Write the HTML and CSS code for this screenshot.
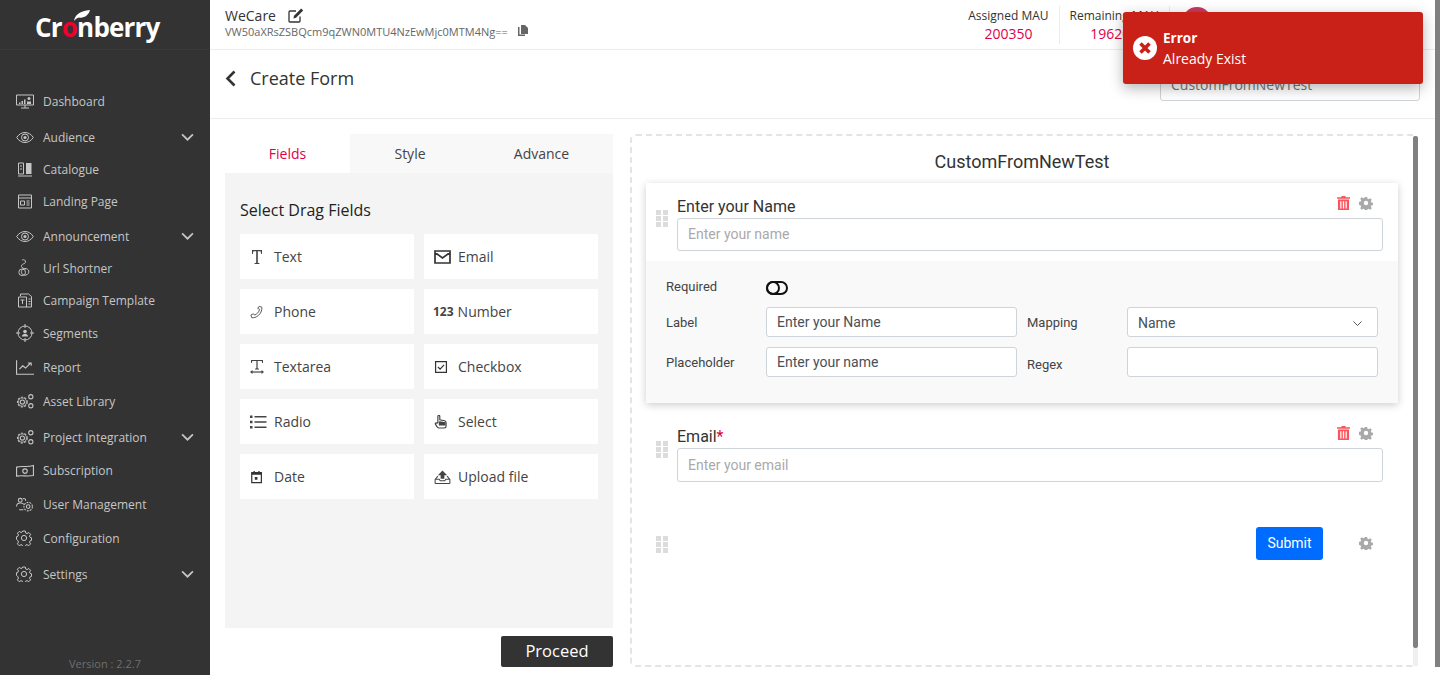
FILE: index.html
```html
<!DOCTYPE html>
<html lang="en">
<head>
  <meta charset="UTF-8" />
  <title>Cronberry - Create Form</title>
  <link rel="stylesheet" href="styles.css">
</head>
<body>
  <svg class="defs" width="0" height="0">
    <symbol id="gear" viewBox="0 0 16 16">
      <path fill="#a9a9a9" fill-rule="evenodd" d="M6.7 1h2.6l.4 2 1.3.6 1.8-1.1 1.8 1.8-1.1 1.8.6 1.3 2 .4v2.6l-2 .4-.6 1.3 1.1 1.8-1.8 1.8-1.8-1.1-1.3.6-.4 2H6.700l-.4-2-1.300-.6-1.800 1.100-1.800-1.800 1.100-1.800-.6-1.300-2-.4V6.700l2-.4.6-1.300-1.100-1.800 1.800-1.800 1.800 1.100 1.300-.6zM8 5.500a2.500 2.500 0 1 0 0 5 2.500 2.500 0 0 0 0-5z"/>
    </symbol>
    <symbol id="trash" viewBox="0 0 14 15">
      <path fill="#f9555d" fill-rule="evenodd" d="M5 0h4l.5 1.200H14v1.600H0V1.200h4.500zM1 3.800h12V15H1zM3.500 5.500v7.800h1.300V5.500zm2.800 0v7.800h1.400V5.500zm2.900 0v7.800h1.300V5.500z"/>
    </symbol>
    <symbol id="drag" viewBox="0 0 12 17">
      <path fill="#dcdcdc" d="M0 0h5v5H0zM7 0h5v5H7zM0 6h5v5H0zM7 6h5v5H7zM0 12h5v5H0zM7 12h5v5H7z"/>
    </symbol>
    <symbol id="eye" viewBox="0 0 18 12">
      <path fill="none" stroke="currentColor" d="M.7 6C3 2.500 6 1 9 1s6 1.500 8.300 5C15 9.500 12 11 9 11S3 9.500.7 6z"/>
      <circle cx="9" cy="6" r="3.500" fill="none" stroke="currentColor"/>
      <circle cx="9" cy="6" r="1.600" fill="currentColor"/>
    </symbol>
    <symbol id="cogs" viewBox="0 0 17 14">
      <circle cx="6" cy="7.500" r="2" fill="none" stroke="currentColor"/>
      <circle cx="6" cy="7.500" r="4.600" fill="none" stroke="currentColor" stroke-dasharray="2 1.300"/>
      <circle cx="6" cy="7.500" r="3.800" fill="none" stroke="currentColor" stroke-width=".7"/>
      <circle cx="14" cy="2.500" r="2" fill="none" stroke="currentColor"/>
      <circle cx="14" cy="11" r="2" fill="none" stroke="currentColor"/>
    </symbol>
    <symbol id="cog" viewBox="0 0 16 16">
      <path fill="none" stroke="currentColor" d="M6.700 1h2.600l.4 2 1.300.6 1.800-1.100 1.800 1.800-1.100 1.800.6 1.300 1.400.4v2.600l-1.400.4-.6 1.300 1.100 1.800-1.800 1.800-1.800-1.100-1.300.6-.4 1.300H6.700l-.4-1.300-1.300-.6-1.800 1.100-1.800-1.800 1.100-1.800-.6-1.300L.5 9.300V6.700l1.400-.4.6-1.300-1.100-1.800 1.800-1.800 1.800 1.100 1.300-.6z"/>
      <circle cx="8" cy="8" r="2.600" fill="none" stroke="currentColor"/>
    </symbol>
  </svg>

  <div class="app">
    <aside class="sidebar">
      <div class="logo">
        <span class="logo-text">Cr<span class="logo-o">o</span>nberry</span>
        <svg class="logo-leaf" width="16" height="11" viewBox="0 0 16 11"><path fill="#fff" d="M0 11C1 5 6 .8 16 0c-1 5-6 8.500-11 7.500C3 8 1.500 9 0 11z"/></svg>
      </div>

      <nav class="nav">
        <a class="nav-item">
          <svg class="nav-icon" viewBox="0 0 18 14"><path fill="none" stroke="currentColor" d="M.5.500h17v10H.500zM5 13.500h8M9 10.500v3"/><path fill="currentColor" d="M3 8h1.500v1.500H3zM5.500 6.500H7v3H5.500zM8 5h1.500v4.500H8z"/><circle cx="13" cy="4" r="1.500" fill="currentColor"/><path fill="currentColor" d="M11 7h4v2.500h-4z"/></svg>
          <span>Dashboard</span>
        </a>
        <a class="nav-item mt4">
          <svg class="nav-icon"><use href="#eye"/></svg>
          <span>Audience</span>
          <svg class="nav-chevron" viewBox="0 0 12 7"><path fill="none" stroke="currentColor" stroke-width="1.600" d="M1 1l5 5 5-5"/></svg>
        </a>
        <a class="nav-item">
          <svg class="nav-icon" viewBox="0 0 15 15"><path fill="none" stroke="currentColor" d="M1 1h5v11H1zM2.500 4h2M2.500 7h2M.5 14h14"/><path fill="currentColor" d="M8.500 1H14v11H8.500z"/></svg>
          <span>Catalogue</span>
        </a>
        <a class="nav-item">
          <svg class="nav-icon" viewBox="0 0 15 15"><path fill="none" stroke="currentColor" d="M1 1h13v13H1zM1 4h13M3 7h4v4H3zM9 7h3M9 9h3M9 11h3"/></svg>
          <span>Landing Page</span>
        </a>
        <a class="nav-item mt3">
          <svg class="nav-icon"><use href="#eye"/></svg>
          <span>Announcement</span>
          <svg class="nav-chevron" viewBox="0 0 12 7"><path fill="none" stroke="currentColor" stroke-width="1.600" d="M1 1l5 5 5-5"/></svg>
        </a>
        <a class="nav-item">
          <svg class="nav-icon nav-icon-tall" viewBox="0 0 16 19"><path fill="none" stroke="currentColor" d="M5 1c2-.8 4 .5 3.500 2.500C8 5 5.500 5 4.500 6.500c-1 2 1 3.500 3 3.500 2.500 0 4 1 4.500 2.500.5 2-1 4-3 4.500-2 .5-4-.5-4.500-2s-.5-2.500.5-3.500 2.500-1.500 4-1"/><circle cx="5" cy="14" r="3.500" fill="none" stroke="currentColor"/></svg>
          <span>Url Shortner</span>
        </a>
        <a class="nav-item">
          <svg class="nav-icon" viewBox="0 0 15 15"><path fill="none" stroke="currentColor" d="M3 3V1h8l3 2.500V14H1V4h8v10M3 7h4M5 7v4M11 6h2M11 8.500h2M11 11h2"/></svg>
          <span>Campaign Template</span>
        </a>
        <a class="nav-item mt1">
          <svg class="nav-icon nav-icon-tall" viewBox="0 0 18 18"><circle cx="9" cy="9" r="7" fill="none" stroke="currentColor"/><path fill="none" stroke="currentColor" d="M9 0v4M9 14v4M0 9h4M14 9h4"/><circle cx="9" cy="7.500" r="1.800" fill="currentColor"/><path fill="currentColor" d="M5.800 12.500c.4-2 1.800-2.800 3.200-2.800s2.800.8 3.200 2.800z"/></svg>
          <span>Segments</span>
        </a>
        <a class="nav-item mt2">
          <svg class="nav-icon" viewBox="0 0 16 13"><path fill="none" stroke="currentColor" d="M.5 0v12.500H16M3 8l3-3 2.500 2L13 2.500M10.500 2.500H13.500V5"/></svg>
          <span>Report</span>
        </a>
        <a class="nav-item mt2">
          <svg class="nav-icon"><use href="#cogs"/></svg>
          <span>Asset Library</span>
        </a>
        <a class="nav-item mt4">
          <svg class="nav-icon"><use href="#cogs"/></svg>
          <span>Project Integration</span>
          <svg class="nav-chevron" viewBox="0 0 12 7"><path fill="none" stroke="currentColor" stroke-width="1.600" d="M1 1l5 5 5-5"/></svg>
        </a>
        <a class="nav-item mt1">
          <svg class="nav-icon" viewBox="0 0 16 11"><path fill="none" stroke="currentColor" d="M.5 2.500C5 1 10 3 15.500 1v9C10 11 5 9.500.5 10.500z"/><circle cx="8" cy="6" r="2" fill="none" stroke="currentColor"/></svg>
          <span>Subscription</span>
        </a>
        <a class="nav-item mt2">
          <svg class="nav-icon" viewBox="0 0 17 14"><circle cx="4" cy="3" r="1.800" fill="none" stroke="currentColor"/><path fill="none" stroke="currentColor" d="M.5 9c0-2.500 1.500-3.500 3.500-3.500S7 6 7.500 7M6.500 1.500C8 1 9.500 2 9 3.500M3 12h4"/><circle cx="11.500" cy="9" r="4" fill="none" stroke="currentColor" stroke-dasharray="1.800 1"/><circle cx="11.500" cy="9" r="1.700" fill="none" stroke="currentColor"/></svg>
          <span>User Management</span>
        </a>
        <a class="nav-item mt2">
          <svg class="nav-icon nav-icon-cog"><use href="#cog"/></svg>
          <span>Configuration</span>
        </a>
        <a class="nav-item mt4">
          <svg class="nav-icon nav-icon-cog"><use href="#cog"/></svg>
          <span>Settings</span>
          <svg class="nav-chevron" viewBox="0 0 12 7"><path fill="none" stroke="currentColor" stroke-width="1.600" d="M1 1l5 5 5-5"/></svg>
        </a>
      </nav>

      <div class="version">Version : 2.2.7</div>
    </aside>

    <div class="main">
      <header class="topbar">
        <div class="project">
          <div class="project-name">
            WeCare
            <svg width="16" height="15" viewBox="0 0 16 15"><path fill="none" stroke="#333" stroke-width="1.300" d="M12 8.500V13a1 1 0 0 1-1 1H2a1 1 0 0 1-1-1V4a1 1 0 0 1 1-1h6"/><path fill="#333" d="M13.200.6l2 2L8 9.800l-2.600.6.600-2.600z"/></svg>
          </div>
          <div class="project-key">
            VW50aXRsZSBQcm9qZWN0MTU4NzEwMjc0MTM4Ng==
            <svg width="10" height="11" viewBox="0 0 10 11"><path fill="#666" d="M3 0h4l3 3v6H3z"/><path fill="#666" d="M1.500 2v7.500H7V11H0V2z"/></svg>
          </div>
        </div>
        <div class="stat">
          <div class="stat-label">Assigned MAU</div>
          <div class="stat-value">200350</div>
        </div>
        <div class="stat">
          <div class="stat-label">Remaining MAU</div>
          <div class="stat-value">196200</div>
        </div>
        <div class="avatar"></div>
      </header>

      <div class="titlebar">
        <svg class="back" width="11" height="17" viewBox="0 0 11 17"><path fill="none" stroke="#333" stroke-width="2.600" d="M9.500 1.500l-7 7 7 7"/></svg>
        <h1>Create Form</h1>
        <input class="form-name" type="text" value="CustomFromNewTest">
      </div>

      <div class="content">
        <section class="fields-panel">
          <div class="tabs">
            <div class="tab tab-active">Fields</div>
            <div class="tab">Style</div>
            <div class="tab">Advance</div>
          </div>
          <div class="fields-body">
            <h2>Select Drag Fields</h2>
            <div class="field-grid">
              <div class="field-card">
                <svg class="field-icon" viewBox="0 0 14 14"><path fill="#444" d="M2 0h10v4h-.8l-.6-2.800H7.800v11.600l1.700.5v.7h-5v-.7l1.700-.5V1.200H3.400L2.800 4H2z"/></svg>
                <span>Text</span>
              </div>
              <div class="field-card">
                <svg class="field-icon field-icon-wide" viewBox="0 0 17 14"><path fill="none" stroke="#333" stroke-width="1.700" d="M1 1h15v12H1zM1 2.500l7.500 5.500L16 2.500"/></svg>
                <span>Email</span>
              </div>
              <div class="field-card">
                <svg class="field-icon" viewBox="0 0 16 16"><path fill="none" stroke="#444" d="M10.500 1.500l3 1c.5 4-1.500 7.500-4 9.500s-5 3-7.500 2.500l-1-3 3-1.500 1.300 1.500c2.500-1 5-3.500 5.700-6.500L8.800 3.800z"/></svg>
                <span>Phone</span>
              </div>
              <div class="field-card field-card-num">
                <b class="field-num">123</b>
                <span>Number</span>
              </div>
              <div class="field-card">
                <svg class="field-icon" viewBox="0 0 14 14"><path fill="#444" d="M1 0h12v3h-.8l-.5-2H7.600v7.300l1.400.5V9.500H5v-.7l1.400-.5V1H2.300l-.5 2H1z"/><path fill="none" stroke="#444" stroke-width="1.200" d="M2 12h10"/><path fill="#444" d="M0 12l2.500-2v4zM14 12l-2.500-2v4z"/></svg>
                <span>Textarea</span>
              </div>
              <div class="field-card">
                <svg class="field-icon" viewBox="0 0 16 16"><path fill="none" stroke="#333" stroke-width="1.400" d="M1.800 1.800h12.400v12.400H1.800zM4.500 8l2.500 2.500 4.500-5"/></svg>
                <span>Checkbox</span>
              </div>
              <div class="field-card">
                <svg class="field-icon field-icon-wide" viewBox="0 0 17 14"><path fill="#444" d="M0 .5h2.500V3H0zM0 5.800h2.500v2.500H0zM0 11h2.500v2.500H0zM4.500 1h12v1.500h-12zM4.500 6.300h12v1.500h-12zM4.500 11.500h12V13h-12z"/></svg>
                <span>Radio</span>
              </div>
              <div class="field-card">
                <svg class="field-icon" viewBox="2 1 12.500 14.500"><path fill="none" stroke="#444" stroke-width="1.200" d="M5 9V2.500c0-1.500 2-1.500 2 0V6l5 1c1.200.3 1.500 1 1.500 2v3.500c0 1-1 2-2 2H6c-1 0-1.500-.5-2-1.500L2.500 10.500c-.5-1 .8-2 1.500-1z"/><path fill="#444" d="M7 7.500l6 1V12H6V8z"/></svg>
                <span>Select</span>
              </div>
              <div class="field-card">
                <svg class="field-icon" viewBox="0 0 16 16"><path fill="none" stroke="#333" stroke-width="1.400" d="M2 3h11v11.500H2z"/><path fill="#333" d="M2 3h11v2.500H2zM4 1h1.500v2H4zM9.500 1H11v2H9.500zM5.500 8h3v3h-3z"/></svg>
                <span>Date</span>
              </div>
              <div class="field-card">
                <svg class="field-icon field-icon-wide" viewBox="0 0 17 15"><path fill="none" stroke="#444" stroke-width="1.100" d="M.6 14.400v-4.400l3-3.500M16.400 14.400v-4.400l-3-3.500M.6 14.400h15.800M.6 10h4.400l1 1.500h5l1-1.500h4.400"/><path fill="#444" d="M8.500.5l5 5h-3v4h-4v-4h-3z"/></svg>
                <span>Upload file</span>
              </div>
            </div>
          </div>
          <div class="panel-foot">
            <button class="proceed">Proceed</button>
          </div>
        </section>

        <section class="builder">
          <div class="builder-title">CustomFromNewTest</div>

          <div class="field-block field-block-active">
            <div class="field-main">
              <svg class="drag"><use href="#drag"/></svg>
              <div class="field-input">
                <label>Enter your Name</label>
                <input type="text" placeholder="Enter your name">
              </div>
              <div class="field-tools">
                <svg class="tool-trash"><use href="#trash"/></svg>
                <svg class="tool-gear"><use href="#gear"/></svg>
              </div>
            </div>
            <div class="field-settings">
              <div class="setting-required">
                <span class="setting-label">Required</span>
                <span class="toggle"><i></i></span>
              </div>
              <div class="setting-grid">
                <span class="setting-label">Label</span>
                <input type="text" value="Enter your Name">
                <span class="setting-label setting-label-right">Mapping</span>
                <div class="select">Name
                  <svg width="9" height="5" viewBox="0 0 9 5"><path fill="none" stroke="#555" d="M.5.500l4 4 4-4"/></svg>
                </div>
                <span class="setting-label">Placeholder</span>
                <input type="text" value="Enter your name">
                <span class="setting-label setting-label-right setting-label-low">Regex</span>
                <input type="text">
              </div>
            </div>
          </div>

          <div class="field-block field-block-email">
            <div class="field-main">
              <svg class="drag"><use href="#drag"/></svg>
              <div class="field-input">
                <label>Email<em>*</em></label>
                <input class="input-tall" type="text" placeholder="Enter your email">
              </div>
              <div class="field-tools">
                <svg class="tool-trash"><use href="#trash"/></svg>
                <svg class="tool-gear"><use href="#gear"/></svg>
              </div>
            </div>
          </div>

          <div class="submit-row">
            <svg class="drag"><use href="#drag"/></svg>
            <button class="submit">Submit</button>
            <svg class="tool-gear"><use href="#gear"/></svg>
          </div>

          <div class="inner-scroll"></div>
        </section>
      </div>
    </div>

    <div class="page-scroll"></div>
  </div>

  <div class="toast">
    <svg width="24" height="24" viewBox="0 0 24 24"><circle cx="12" cy="12" r="12" fill="#fff"/><path fill="none" stroke="#c92017" stroke-width="3.600" d="M7.500 7.500l9 9M16.500 7.500l-9 9"/></svg>
    <div>
      <div class="toast-title">Error</div>
      <div class="toast-text">Already Exist</div>
    </div>
  </div>
</body>
</html>
```

FILE: styles.css
```css
* {
  box-sizing: border-box;
}
html, body {
  margin: 0;
  height: 675px;
  overflow: hidden;
}
body {
  background: #fff;
  color: #333;
  font-family: "Open Sans", sans-serif;
  font-size: 14px;
}
.defs {
  position: absolute;
}
.app {
  display: flex;
  height: 675px;
}

/* sidebar */
.sidebar {
  width: 210px;
  flex: none;
  background: #333;
  color: #c6c6c6;
  display: flex;
  flex-direction: column;
  position: relative;
}
.logo {
  height: 50px;
  border-bottom: 1px solid #3a3a3a;
  padding: 6px 0 0 35px;
  position: relative;
}
.logo-text {
  color: #fff;
  font-size: 26px;
  font-weight: 700;
  line-height: 42px;
  letter-spacing: -.8px;
}
.logo-o {
  color: #f0002d;
}
.logo-leaf {
  position: absolute;
  left: 74px;
  top: 10px;
}
.nav {
  margin-top: 35px;
  padding-left: 16px;
}
.nav-item {
  display: flex;
  align-items: center;
  height: 32px;
  font-size: 12px;
}
.mt1 { margin-top: 1px; }
.mt2 { margin-top: 2px; }
.mt3 { margin-top: 3px; }
.mt4 { margin-top: 4px; }
.nav-icon {
  width: 18px;
  height: 15px;
  margin-right: 9px;
  flex: none;
}
.nav-icon-tall {
  height: 18px;
}
.nav-icon-cog {
  width: 16px;
  height: 16px;
  margin-right: 11px;
}
.nav-chevron {
  width: 13px;
  height: 8px;
  margin-left: auto;
  margin-right: 16px;
}
.version {
  margin-top: auto;
  padding-bottom: 4px;
  text-align: center;
  font-size: 11px;
  color: #6f6f6f;
}

/* top */
.main {
  flex: 1;
  min-width: 0;
  display: flex;
  flex-direction: column;
}
.topbar {
  height: 50px;
  flex: none;
  border-bottom: 1px solid #ececec;
  display: flex;
  padding: 6px 0 0 15px;
}
.project {
  margin-right: auto;
}
.project-name {
  display: flex;
  align-items: center;
  gap: 12px;
  font-size: 14px;
  line-height: 19px;
}
.project-key {
  display: flex;
  gap: 10px;
  font-size: 11px;
  line-height: 14px;
  color: #666;
}
.stat {
  height: 38px;
  padding: 0 10px;
  border-right: 1px solid #ececec;
  text-align: center;
  font-size: 12px;
  line-height: 20px;
}
.stat-value {
  color: #e0004d;
  font-size: 14px;
  line-height: 15px;
}
.avatar {
  width: 30px;
  height: 30px;
  border-radius: 50%;
  background: #c8385f;
  margin: 1px 228px 0 12px;
}
.titlebar {
  height: 69px;
  flex: none;
  border-bottom: 1px solid #ececec;
  display: flex;
  align-items: center;
  padding: 0 20px 0 15px;
}
.back {
  margin-bottom: 11px;
}
.titlebar h1 {
  margin: 0 0 12px 14px;
  font-size: 18px;
  font-weight: 400;
}
.form-name {
  margin: 1px 0 0 auto;
  width: 260px;
  height: 33px;
  padding: 0 10px;
  border: 1px solid #ced4da;
  border-radius: 3px;
  color: #777;
  font: 14px "Open Sans", sans-serif;
}

/* content */
.content {
  flex: 1;
  display: flex;
  gap: 17px;
  padding: 15px 22px 8px 15px;
  min-height: 0;
}
.fields-panel {
  width: 388px;
  flex: none;
  display: flex;
  flex-direction: column;
}
.tabs {
  display: grid;
  grid-template-columns: 125px 120px 143px;
  height: 39px;
  background: #f8f8f8;
  flex: none;
}
.tab {
  text-align: center;
  line-height: 40px;
  font-size: 14px;
  color: #444;
}
.tab-active {
  background: #fff;
  color: #e0004d;
  border-bottom: 1px solid #d6003f;
}
.fields-body {
  flex: 1;
  background: #f4f4f4;
  padding: 26px 15px 0;
}
.fields-body h2 {
  margin: 0 0 13px;
  font-size: 16px;
  font-weight: 400;
  line-height: 22px;
  color: #222;
}
.field-grid {
  display: grid;
  grid-template-columns: 174px 174px;
  grid-auto-rows: 45px;
  gap: 10px;
}
.field-card {
  background: #fff;
  display: flex;
  align-items: center;
  padding-left: 10px;
  color: #444;
}
.field-card-num {
  padding-left: 9px;
}
.field-icon {
  width: 14px;
  height: 14px;
  flex: none;
  margin-right: 10px;
}
.field-icon-wide {
  width: 17px;
  margin-right: 7px;
}
.field-num {
  font-size: 12px;
  margin-right: 4px;
}
.panel-foot {
  height: 39px;
  flex: none;
  display: flex;
  justify-content: flex-end;
  align-items: flex-end;
}
.proceed {
  width: 112px;
  height: 31px;
  border: 0;
  border-radius: 2px;
  background: #333;
  color: #fff;
  padding: 0 0 2px;
  font: 16.500px "Open Sans", sans-serif;
}

/* form builder */
.builder {
  flex: 1;
  min-width: 0;
  border: 2px dashed #e4e4e4;
  border-radius: 6px;
  padding: 0 18px 0 14px;
  position: relative;
  font-family: Roboto, sans-serif;
}
.builder-title {
  text-align: center;
  font-size: 18px;
  line-height: 20px;
  padding-top: 16px;
  margin-bottom: 1px;
  height: 46px;
}
.field-main {
  display: flex;
  padding: 12px 15px 10px 10px;
  position: relative;
}
.drag {
  width: 12px;
  height: 17px;
  flex: none;
  margin: 15px 9px 0 0;
}
.field-input {
  flex: 1;
}
.field-input label {
  display: block;
  font-size: 16px;
  line-height: 23px;
}
.field-input em {
  color: #e0002d;
  font-style: normal;
}
input {
  display: block;
  width: 100%;
  height: 33px;
  border: 1px solid #ced4da;
  border-radius: 3px;
  padding: 0 10px 1px;
  font: 14px Roboto, sans-serif;
  color: #495057;
  background: #fff;
}
input::placeholder {
  color: #aaa;
}
.input-tall {
  height: 34px;
  padding-bottom: 0;
}
.field-tools {
  position: absolute;
  right: 25px;
  top: 13px;
  display: flex;
  align-items: center;
  gap: 9px;
}
.tool-trash {
  width: 13px;
  height: 14px;
}
.tool-gear {
  width: 14px;
  height: 14px;
}
.field-block-active {
  box-shadow: 0 2px 8px rgba(0, 0, 0, .2);
}
.field-settings {
  background: #f9f9f9;
  padding: 15px 20px 26px;
  font-size: 13px;
}
.setting-required {
  display: flex;
  align-items: center;
  height: 21px;
}
.setting-label {
  color: #444;
}
.setting-required .setting-label {
  width: 100px;
}
.toggle {
  width: 22px;
  height: 14px;
  border: 2px solid #111;
  border-radius: 7px;
  position: relative;
  margin-top: 3px;
}
.toggle i {
  position: absolute;
  left: -2px;
  top: -2px;
  width: 14px;
  height: 14px;
  border: 2px solid #111;
  border-radius: 50%;
}
.setting-grid {
  display: grid;
  grid-template-columns: 100px 251px 110px 251px;
  grid-auto-rows: 30px;
  row-gap: 10px;
  align-items: center;
  margin-top: 10px;
}
.setting-grid input, .select {
  height: 30px;
}
.setting-grid input {
  padding-bottom: 0;
}
.setting-label-right {
  padding-left: 10px;
}
.setting-label-low {
  padding-top: 4px;
}
.select {
  border: 1px solid #ced4da;
  border-radius: 3px;
  background: #fff;
  padding: 2px 15px 0 10px;
  font-size: 14px;
  color: #495057;
  display: flex;
  align-items: center;
  justify-content: space-between;
}
.field-block-email .field-main {
  padding-top: 22px;
}
.field-block-email .drag {
  margin-top: 16px;
}
.field-block-email .field-tools {
  top: 23px;
}
.submit-row {
  display: flex;
  align-items: center;
  padding: 35px 25px 0 10px;
}
.submit-row .drag {
  margin: 2px 0 0;
}
.submit-row .tool-gear {
  margin-bottom: 2px;
}
.submit {
  margin-left: auto;
  margin-right: 36px;
  width: 67px;
  height: 33px;
  border: 0;
  border-radius: 3px;
  background: #006bff;
  color: #fff;
  padding: 0 0 1px;
  font: 14px Roboto, sans-serif;
}

/* scrollbars and toast sit over the page */
.inner-scroll {
  position: absolute;
  right: -2px;
  top: 0;
  width: 5px;
  height: 512px;
  background: #808080;
  border-radius: 2px;
}
.inner-scroll::after {
  content: "";
  position: absolute;
  left: 0;
  top: 100%;
  width: 5px;
  height: 18px;
  background: #efefef;
}
.page-scroll {
  position: absolute;
  right: 0;
  top: 0;
  width: 5px;
  height: 667px;
  background: #808080;
}
.toast {
  position: absolute;
  left: 1123px;
  top: 12px;
  width: 300px;
  height: 72px;
  background: #c92017;
  border-radius: 3px;
  box-shadow: 0 4px 14px rgba(0, 0, 0, .3);
  color: #fff;
  display: flex;
  align-items: center;
  gap: 6px;
  padding-left: 10px;
}
.toast-title {
  font-weight: 700;
  font-size: 13.500px;
  line-height: 20px;
}
.toast-text {
  font-size: 14px;
  line-height: 20px;
  margin-top: 1px;
}
```
